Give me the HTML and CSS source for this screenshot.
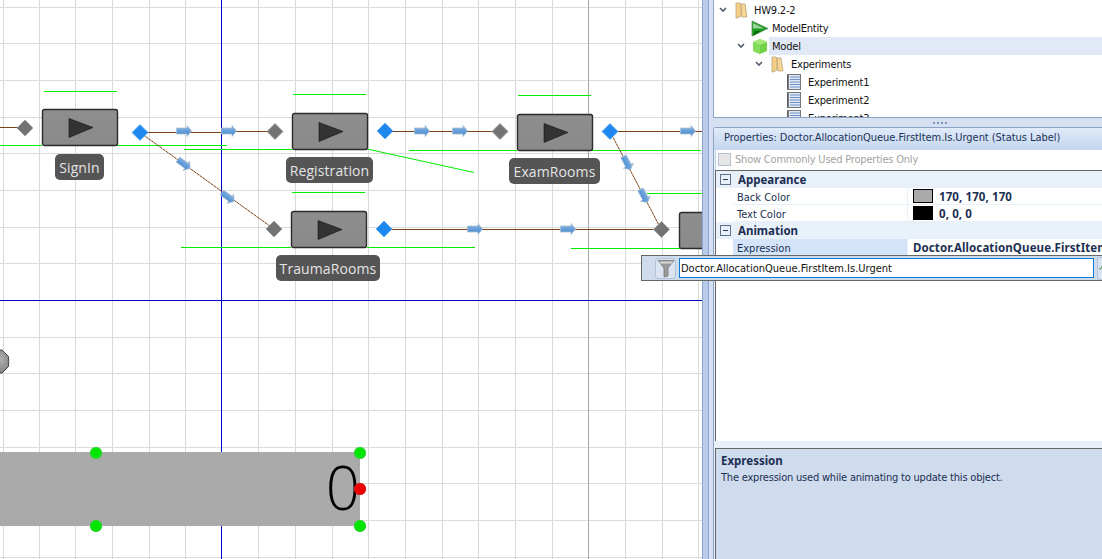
FILE: index.html
```html
<!DOCTYPE html>
<html lang="en">
<head>
    <meta charset="UTF-8">
    <meta name="viewport" content="width=device-width, initial-scale=1.0">
    <title>Facility view</title>
    <link rel="stylesheet" href="styles.css">
</head>
<body>
<div class="app">

    <!-- facility canvas -->
    <div class="canvas">
        <svg class="drawing" width="702" height="559" viewBox="0 0 702 559">
            <defs>
                <linearGradient id="box" x1="0" y1="0" x2="0" y2="1">
                    <stop offset="0" stop-color="#8e8e8e"/>
                    <stop offset="1" stop-color="#8a8a8a"/>
                </linearGradient>
                <linearGradient id="arrowfill" x1="0" y1="0" x2="0" y2="1">
                    <stop offset="0" stop-color="#8db8e4"/>
                    <stop offset="1" stop-color="#3f87cf"/>
                </linearGradient>
                <radialGradient id="octa" cx="0.5" cy="0.4" r="0.7">
                    <stop offset="0" stop-color="#b0b0b0"/>
                    <stop offset="1" stop-color="#7c7c7c"/>
                </radialGradient>
                <g id="arrow">
                    <path d="M-7.5 -3H3V-5.500L7.500 0L3 5.500V3H-7.500Z" fill="url(#arrowfill)" stroke="#a9bcd2" stroke-width="0.800"/>
                </g>
                <g id="server">
                    <rect x="0.5" y="0.5" width="75" height="36" rx="2" fill="url(#box)" stroke="#2b2b2b" stroke-width="1.400"/>
                    <path d="M27 9.5V28.500L51 18.500Z" fill="#333" stroke="#111" stroke-width="0.6"/>
                </g>
                <path id="inode" d="M0 -8L8 0L0 8L-8 0Z" fill="#737373" stroke="#9a9a9a" stroke-width="0.8"/>
                <path id="onode" d="M0 -8L8 0L0 8L-8 0Z" fill="#1e88ee" stroke="#5aa9f0" stroke-width="0.6"/>
            </defs>

            <!-- grid -->
            <path class="gridline" d="M3 0V559M39 0V559M75 0V559M112 0V559M149 0V559M185 0V559M258 0V559M295 0V559M332 0V559M368 0V559M405 0V559M442 0V559M478 0V559M515 0V559M552 0V559M625 0V559M662 0V559M698 0V559"/>
            <path class="gridline" d="M0 7H702M0 43H702M0 80H702M0 117H702M0 153H702M0 190H702M0 227H702M0 263H702M0 337H702M0 373H702M0 410H702M0 447H702M0 483H702M0 520H702M0 557H702"/>
            <path class="gridline-dark" d="M588 0V559"/>
            <path class="axis" d="M221 0V559M0 300H702"/>

            <!-- status lines -->
            <path class="statusline" d="M44 91H117M0 145.500H42M117 145.500H227M293 94H366M184 149.500H292M292 192.500H365M181 247.500H291M367 247.500H475M518 95.500H591M409 150.500H517M591 150.500H701M647 193.500H702M571 248.500H680"/>
            <path class="statusline-slant" d="M367 149L474 172.500"/>

            <!-- links -->
            <path class="link" d="M0 127.500H25M140 132.500H222M222 131.500H275M385 131.500H500M384 229.500H661M610 131.500H702"/>
            <path class="link-thin" d="M140 132.500L274 229M610 131.500L661 229"/>

            <use href="#arrow" x="184" y="131"/>
            <use href="#arrow" x="229" y="131"/>
            <use href="#arrow" x="422" y="131"/>
            <use href="#arrow" x="460" y="131"/>
            <use href="#arrow" x="688" y="131"/>
            <use href="#arrow" x="475" y="229"/>
            <use href="#arrow" x="568" y="229"/>
            <use href="#arrow" transform="translate(184 164) rotate(36)"/>
            <use href="#arrow" transform="translate(228 197) rotate(36)"/>
            <use href="#arrow" transform="translate(627 163) rotate(62)"/>
            <use href="#arrow" transform="translate(644 196) rotate(62)"/>

            <!-- nodes -->
            <use href="#inode" x="25" y="128"/>
            <use href="#onode" x="140" y="132.500"/>
            <use href="#inode" x="275" y="131.500"/>
            <use href="#onode" x="385" y="131"/>
            <use href="#inode" x="500" y="131.500"/>
            <use href="#onode" x="610" y="131.500"/>
            <use href="#inode" x="274" y="229"/>
            <use href="#onode" x="384" y="229"/>
            <use href="#inode" x="661.500" y="229.500"/>

            <!-- servers -->
            <use href="#server" x="42" y="109"/>
            <use href="#server" x="292" y="113"/>
            <use href="#server" x="291" y="211"/>
            <use href="#server" x="517" y="114"/>
            <use href="#server" x="679" y="212"/>

            <!-- partial object on the left edge -->
            <path d="M-6 350H2L8.500 356.500Q9 361.500 8.500 366.500L2 373H-6Z" fill="url(#octa)" stroke="#444"/>
        </svg>

        <div class="node-label label-signin">SignIn</div>
        <div class="node-label label-registration">Registration</div>
        <div class="node-label label-exam">ExamRooms</div>
        <div class="node-label label-trauma">TraumaRooms</div>

        <div class="status-label">0</div>
        <span class="handle handle-tl"></span>
        <span class="handle handle-tr"></span>
        <span class="handle handle-bl"></span>
        <span class="handle handle-br"></span>
        <span class="handle handle-red"></span>
    </div>

    <!-- right side -->
    <div class="sidebar">
        <div class="splitter"></div>
        <div class="panes">
            <div class="tree">
                <div class="tree-row indent-0">
                    <svg class="chevron" width="8" height="6" viewBox="0 0 8 6"><path d="M1 1L4 4L7 1" fill="none" stroke="#4e5d72" stroke-width="1.600"/></svg>
                    <svg class="tree-icon" width="14" height="17" viewBox="0 0 14 17"><path d="M2 1H6L7 2V14L3 16H2Z" fill="#f5cf85" stroke="#b9a27a" stroke-width="0.800"/><path d="M7 2H11L13 15H8Z" fill="#f7d693" stroke="#b9a27a" stroke-width="0.800"/></svg>
                    <span>HW9.2-2</span>
                </div>
                <div class="tree-row indent-1 no-chevron">
                    <svg class="tree-icon" width="18" height="17" viewBox="0 0 18 17"><path d="M1 1L17 8.500L1 16Z" fill="#1c9a1c" stroke="#5f8f5f" stroke-width="0.800"/><path d="M2 3L13 8.500H2Z" fill="#9ad69a"/><path d="M2 16L10 11H4Z" fill="#0b6b0b"/></svg>
                    <span>ModelEntity</span>
                </div>
                <div class="tree-row indent-1b selected">
                    <svg class="chevron" width="8" height="6" viewBox="0 0 8 6"><path d="M1 1L4 4L7 1" fill="none" stroke="#4e5d72" stroke-width="1.600"/></svg>
                    <svg class="tree-icon" width="16" height="17" viewBox="0 0 16 17"><path d="M8 1L15 4V13L8 16L1 13V4Z" fill="#72d247"/><path d="M8 1L15 4L8 7L1 4Z" fill="#a3ea78"/><path d="M8 7V16L1 13V4Z" fill="#84dc5c"/></svg>
                    <span>Model</span>
                </div>
                <div class="tree-row indent-2">
                    <svg class="chevron" width="8" height="6" viewBox="0 0 8 6"><path d="M1 1L4 4L7 1" fill="none" stroke="#4e5d72" stroke-width="1.600"/></svg>
                    <svg class="tree-icon" width="14" height="17" viewBox="0 0 14 17"><path d="M2 1H6L7 2V14L3 16H2Z" fill="#f5cf85" stroke="#b9a27a" stroke-width="0.800"/><path d="M7 2H11L13 15H8Z" fill="#f7d693" stroke="#b9a27a" stroke-width="0.800"/></svg>
                    <span>Experiments</span>
                </div>
                <div class="tree-row indent-3">
                    <svg class="tree-icon" width="14" height="16" viewBox="0 0 14 16"><rect x="0.500" y="0.500" width="13" height="15" fill="#dfe8f4" stroke="#777"/><path d="M3 3H13M3 5.500H13M3 8H13M3 10.500H13M3 13H13" stroke="#6f93c8"/><path d="M1 1V15" stroke="#555" stroke-width="1.500"/></svg>
                    <span>Experiment1</span>
                </div>
                <div class="tree-row indent-3">
                    <svg class="tree-icon" width="14" height="16" viewBox="0 0 14 16"><rect x="0.500" y="0.500" width="13" height="15" fill="#dfe8f4" stroke="#777"/><path d="M3 3H13M3 5.500H13M3 8H13M3 10.500H13M3 13H13" stroke="#6f93c8"/><path d="M1 1V15" stroke="#555" stroke-width="1.500"/></svg>
                    <span>Experiment2</span>
                </div>
                <div class="tree-row indent-3">
                    <svg class="tree-icon" width="14" height="16" viewBox="0 0 14 16"><rect x="0.500" y="0.500" width="13" height="15" fill="#dfe8f4" stroke="#777"/><path d="M3 3H13M3 5.500H13M3 8H13M3 10.500H13M3 13H13" stroke="#6f93c8"/><path d="M1 1V15" stroke="#555" stroke-width="1.500"/></svg>
                    <span>Experiment3</span>
                </div>
            </div>

            <div class="sizer"><span></span><span></span><span></span><span></span></div>

            <div class="properties">
                <div class="properties-title">Properties: Doctor.AllocationQueue.FirstItem.Is.Urgent (Status Label)</div>
                <div class="properties-body">
                    <div class="common-only">
                        <span class="checkbox"></span>
                        <span>Show Commonly Used Properties Only</span>
                    </div>
                    <div class="grid">
                        <div class="category"><span class="expander"></span><span>Appearance</span></div>
                        <div class="prop">
                            <span class="prop-name">Back Color</span>
                            <span class="prop-value"><i class="swatch swatch-gray"></i>170, 170, 170</span>
                        </div>
                        <div class="prop">
                            <span class="prop-name">Text Color</span>
                            <span class="prop-value"><i class="swatch swatch-black"></i>0, 0, 0</span>
                        </div>
                        <div class="category"><span class="expander"></span><span>Animation</span></div>
                        <div class="prop prop-selected">
                            <span class="prop-name">Expression</span>
                            <span class="prop-value">Doctor.AllocationQueue.FirstItem.Is.Urgent</span>
                        </div>
                    </div>
                    <div class="help">
                        <b>Expression</b>
                        <p>The expression used while animating to update this object.</p>
                    </div>
                </div>
            </div>
        </div>
    </div>

    <!-- floating expression editor -->
    <div class="expr-bar">
        <div class="filter-btn">
            <svg width="18" height="19" viewBox="0 0 18 19"><path d="M1 1.500H17L11 9V17L7 18V9Z" fill="#9a9a9a" stroke="#777" stroke-width="0.800"/><path d="M2 2.500H16L14.500 4.500H3.500Z" fill="#d8d8d8"/></svg>
        </div>
        <input class="expr-input" type="text" value="Doctor.AllocationQueue.FirstItem.Is.Urgent">
        <div class="accept-btn">
            <svg width="6" height="10" viewBox="0 0 6 10"><path d="M0 4L3 8L6 1" fill="none" stroke="#2f8f2f" stroke-width="1.500"/></svg>
        </div>
    </div>

</div>
</body>
</html>
```

FILE: styles.css
```css
html, body {
    margin: 0;
    padding: 0;
}

body {
    width: 1102px;
    height: 559px;
    overflow: hidden;
    font-family: "DejaVu Sans", sans-serif;
    font-stretch: condensed;
    font-size: 11px;
    color: #15253f;
}

.app {
    position: relative;
    display: flex;
    width: 1102px;
    height: 559px;
    overflow: hidden;
}

/* canvas */
.canvas {
    position: relative;
    flex: 0 0 702px;
    height: 559px;
    background-color: #ffffff;
    overflow: hidden;
}

.drawing {
    display: block;
}

.gridline {
    fill: none;
    stroke: #dadada;
    stroke-width: 1;
    shape-rendering: crispEdges;
}

.gridline-dark {
    fill: none;
    stroke: #a8a8a8;
    shape-rendering: crispEdges;
}

.axis {
    fill: none;
    stroke: #0000cc;
    shape-rendering: crispEdges;
}

.statusline {
    fill: none;
    stroke: #00ee00;
    shape-rendering: crispEdges;
}

.statusline-slant {
    fill: none;
    stroke: #00ee00;
}

.link {
    fill: none;
    stroke: #7d3f16;
    stroke-width: 1;
    shape-rendering: crispEdges;
}

.link-thin {
    fill: none;
    stroke: #7d3f16;
    stroke-width: 1;
    stroke-dasharray: 3 0.500;
}

.node-label {
    position: absolute;
    height: 26px;
    line-height: 28px;
    text-align: center;
    background-color: #555555;
    border-radius: 5px;
    color: #e4e4e4;
    font-family: "Open Sans", sans-serif;
    font-stretch: normal;
    font-size: 14px;
    letter-spacing: 0.100px;
}

.label-signin { left: 55px; top: 154px; width: 49px; }
.label-registration { left: 286px; top: 157px; width: 87px; }
.label-exam { left: 509px; top: 158px; width: 91px; }
.label-trauma { left: 276px; top: 255px; width: 104px; }

.status-label {
    position: absolute;
    left: 0;
    top: 452px;
    width: 360px;
    height: 74px;
    background-color: #aaaaaa;
    color: #000000;
    font-family: "Open Sans", sans-serif;
    font-stretch: normal;
    font-weight: 300;
    font-size: 60px;
    line-height: 70px;
    text-align: right;
}

.handle {
    position: absolute;
    width: 12px;
    height: 12px;
    margin: -6px 0 0 -6px;
    border-radius: 50%;
    background-color: #00e600;
    box-shadow: inset 0 0 0 1px #3ccf3c;
}

.handle-tl { left: 96px; top: 452.500px; }
.handle-tr { left: 360px; top: 452.500px; }
.handle-bl { left: 96px; top: 526px; }
.handle-br { left: 360px; top: 526px; }
.handle-red {
    left: 360px;
    top: 489px;
    background-color: #f00000;
    box-shadow: inset 0 0 0 1px #d81010;
}

/* sidebar */
.sidebar {
    flex: 1;
    display: flex;
    background-color: #d5e1f2;
}

.splitter {
    flex: 0 0 5px;
    background-color: #b9cbe8;
    border-left: 1px solid #8ba4d0;
    border-right: 1px solid #8ba4d0;
}

.panes {
    flex: 1;
    display: flex;
    flex-direction: column;
    padding-left: 4px;
    min-width: 0;
}

.tree {
    flex: 0 0 118px;
    padding-top: 1px;
    background-color: #ffffff;
    border-left: 1px solid #8ea4c4;
    border-bottom: 1px solid #8ea4c4;
    overflow: hidden;
    box-sizing: border-box;
}

.tree-row {
    display: flex;
    align-items: center;
    height: 18px;
    white-space: nowrap;
    letter-spacing: -0.200px;
    color: #111111;
}

.indent-0 { padding-left: 5px; }
.indent-1 { padding-left: 37px; }
.indent-1b { padding-left: 23px; }
.indent-2 { padding-left: 41px; }
.indent-3 { padding-left: 73px; }

.chevron {
    margin-right: 7px;
}

.indent-0 .tree-icon { margin-right: 6px; }
.indent-1 .tree-icon { margin-right: 3px; }
.indent-1b .tree-icon { margin-right: 4px; }
.indent-2 .tree-icon { margin-right: 7px; }
.indent-3 .tree-icon { margin-right: 7px; }

.selected {
    background: linear-gradient(to right, #ffffff 0, #ffffff 55px, #e0e9f5 55px);
}

.sizer {
    flex: 0 0 9px;
    display: flex;
    justify-content: center;
    align-items: center;
    gap: 2px;
}

.sizer span {
    width: 2px;
    height: 2px;
    background-color: #7f93b3;
}

.properties {
    flex: 1;
    display: flex;
    flex-direction: column;
    min-height: 0;
    border-left: 1px solid #8ea4c4;
    border-top: 1px solid #8ea4c4;
    border-top-left-radius: 3px;
}

.properties-title {
    flex: 0 0 22px;
    line-height: 20px;
    padding-left: 10px;
    white-space: nowrap;
    letter-spacing: -0.050px;
    background: linear-gradient(to bottom, #e0ebf9, #c3d5ee);
    color: #1c3358;
}

.properties-body {
    flex: 1;
    display: flex;
    flex-direction: column;
    min-height: 0;
    padding-left: 1px;
    background-color: #e8eff8;
}

.common-only {
    flex: 0 0 20px;
    display: flex;
    align-items: center;
    box-sizing: border-box;
    padding-bottom: 2px;
    background-color: #ffffff;
    color: #a3a3a3;
    white-space: nowrap;
    letter-spacing: -0.200px;
    border-left: 1px solid #c4d0e0;
}

.checkbox {
    width: 11px;
    height: 11px;
    margin: 0 4px 0 2px;
    background-color: #e6e6e6;
    border: 1px solid #b4c0d0;
}

.grid {
    flex: 0 0 271px;
    background-color: #ffffff;
    border-left: 1px solid #666666;
    border-top: 1px solid #666666;
    overflow: hidden;
    box-sizing: border-box;
}

.category {
    display: flex;
    align-items: center;
    height: 17px;
    box-sizing: border-box;
    background-color: #e8f0fa;
    font-family: "Noto Sans", sans-serif;
    font-stretch: normal;
    font-size: 11.500px;
    font-weight: 700;
    color: #1b2f52;
}

.expander {
    position: relative;
    width: 9px;
    height: 9px;
    margin: 0 7px 0 4px;
    border: 1px solid #5f7088;
    box-sizing: content-box;
}

.expander::after {
    content: "";
    position: absolute;
    left: 2px;
    top: 4px;
    width: 5px;
    height: 1px;
    background-color: #2d3a50;
}

.prop {
    display: flex;
    height: 17px;
    margin-left: 17px;
    white-space: nowrap;
    line-height: 19px;
}

.prop-name {
    flex: 0 0 170px;
    height: 16px;
    padding-left: 4px;
    color: #1b2f52;
    border-bottom: 1px solid #e8f0fa;
    border-right: 1px solid #e8f0fa;
    box-sizing: content-box;
}

.prop-value {
    flex: 1;
    display: flex;
    align-items: center;
    padding-left: 5px;
    font-family: "Noto Sans", sans-serif;
    font-stretch: normal;
    font-size: 11.500px;
    letter-spacing: 0.100px;
    font-weight: 700;
    color: #1b2f52;
    border-bottom: 1px solid #e8f0fa;
    overflow: hidden;
}

.prop-selected .prop-name {
    background-color: #d3e4f9;
}

.swatch {
    width: 20px;
    height: 14px;
    margin-right: 6px;
    box-sizing: border-box;
    border: 1px solid #000000;
}

.swatch-gray { background-color: #aaaaaa; }
.swatch-black { background-color: #000000; }

.help {
    flex: 1;
    margin-top: 7px;
    padding: 4px 0 0 5px;
    background-color: #cfdcee;
    border-left: 1px solid #666666;
    border-top: 1px solid #666666;
    color: #1b2f52;
}

.help b {
    display: block;
    line-height: 15px;
    font-family: "Noto Sans", sans-serif;
    font-stretch: normal;
    font-size: 11.500px;
}

.help p {
    margin: 2px 0 0;
    line-height: 16px;
    letter-spacing: -0.200px;
}

/* floating editor */
.expr-bar {
    position: absolute;
    left: 641px;
    top: 255px;
    width: 461px;
    height: 26px;
    display: flex;
    align-items: center;
    box-sizing: border-box;
    padding-left: 13px;
    background-color: #cfdcee;
    border: 1px solid #666666;
    border-right: 0;
}

.filter-btn {
    flex: 0 0 21px;
    height: 21px;
    display: flex;
    align-items: center;
    justify-content: center;
    box-sizing: border-box;
    background-color: #dbe5f2;
    border: 1px solid #b3c2d8;
    border-radius: 3px;
    margin-right: 3px;
}

.expr-input {
    flex: 0 0 415px;
    height: 20px;
    margin: 0;
    box-sizing: border-box;
    padding: 0 1px;
    background-color: #ffffff;
    border: 1px solid #0a78d7;
    outline: 0;
    font-family: "DejaVu Sans", sans-serif;
    font-stretch: condensed;
    font-size: 11px;
    color: #111111;
}

.accept-btn {
    flex: 1;
    height: 21px;
    margin-left: 3px;
    padding-left: 1px;
    background-color: #dbe5f2;
    border: 1px solid #b3c2d8;
    border-right: 0;
    border-radius: 3px 0 0 3px;
    display: flex;
    align-items: center;
    overflow: hidden;
}
```
